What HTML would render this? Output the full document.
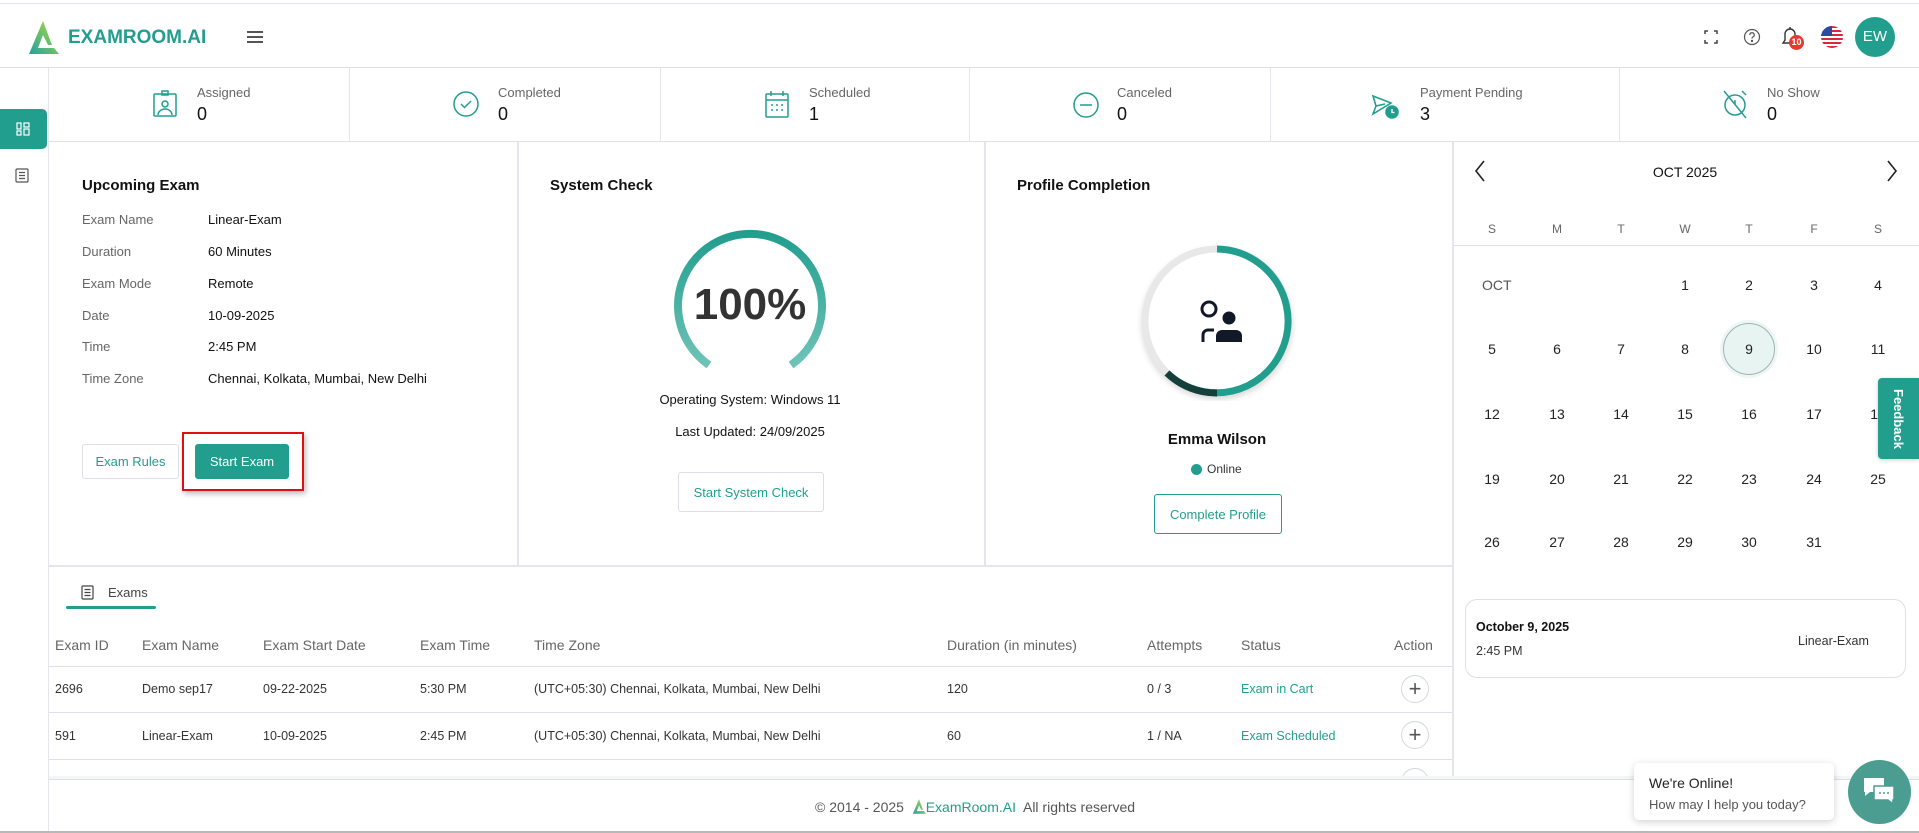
<!DOCTYPE html>
<html><head><meta charset="utf-8"><style>
*{box-sizing:border-box;margin:0;padding:0}
body{width:1919px;height:833px;overflow:hidden;background:#fff;font-family:"Liberation Sans",sans-serif;color:#111;position:relative}
.a{position:absolute}
.t{color:#229e8e}
.lbl{font-size:13px;color:#666}
.val{font-size:13px;color:#111}
.th{font-size:14px;color:#666}
.td{font-size:12.5px;color:#333}
.btn{position:absolute;border:1px solid #dcdfe6;border-radius:3px;font-size:13px;color:#229e8e;display:flex;align-items:center;justify-content:center;background:#fff}
</style></head><body>
<div class="a" style="left:0;top:3px;width:1919px;height:1px;background:#e4e6ec"></div>
<!-- header -->
<svg class="a" style="left:27px;top:21px" width="32" height="33" viewBox="0 0 32 33">
<defs><linearGradient id="g" x1="0" y1="1" x2="1" y2="0"><stop offset="0" stop-color="#1fa3a0"/><stop offset="1" stop-color="#b6dc3a"/></linearGradient></defs>
<path d="M16 0 L2 33 H32 L27 27 H11 L16 14 L21 24 H25 Z" fill="url(#g)"/>
</svg>
<div class="a t" style="left:68px;top:27px;font-size:19px;font-weight:bold;letter-spacing:0px">EXAMROOM.AI</div>
<div class="a" style="left:247px;top:31px;width:16px;height:2px;background:#555;box-shadow:0 5px 0 #555,0 10px 0 #555"></div>
<svg class="a" style="left:1704px;top:30px" width="14" height="14" fill="none" stroke="#444" stroke-width="1.5"><path d="M1 4V1h3M10 1h3v3M13 10v3h-3M4 13H1v-3"/></svg>
<svg class="a" style="left:1743px;top:28px" width="18" height="18" fill="none" stroke="#555" stroke-width="1.2"><circle cx="9" cy="9" r="7.5"/><path d="M6.8 7a2.2 2.2 0 1 1 3 2c-.7.4-.8.8-.8 1.6"/><circle cx="9" cy="13" r=".6" fill="#555"/></svg>
<svg class="a" style="left:1780px;top:25px" width="22" height="24" fill="none" stroke="#333" stroke-width="1.4"><path d="M3 18h14l-2-3V9a5 5 0 0 0-10 0v6z"/><path d="M10 2v2"/></svg>
<div class="a" style="left:1789px;top:35px;width:15px;height:15px;border-radius:50%;background:#e8392f;color:#fff;font-size:9px;font-weight:bold;text-align:center;line-height:15px">10</div>
<svg class="a" style="left:1821px;top:26px" width="22" height="22" viewBox="0 0 22 22"><clipPath id="c"><circle cx="11" cy="11" r="11"/></clipPath><g clip-path="url(#c)"><rect width="22" height="22" fill="#fff"/><g fill="#d8283a"><rect y="0" width="22" height="2"/><rect y="4" width="22" height="2"/><rect y="8" width="22" height="2"/><rect y="12" width="22" height="2"/><rect y="16" width="22" height="2"/><rect y="20" width="22" height="2"/></g><rect width="11" height="10" fill="#2b4aa0"/></g></svg>
<div class="a" style="left:1855px;top:17px;width:40px;height:40px;border-radius:50%;background:#229e8e;color:#fff;font-size:15px;text-align:center;line-height:40px">EW</div>
<div class="a" style="left:0;top:67px;width:1919px;height:1px;background:#dde0e8"></div>
<!-- sidebar -->
<div class="a" style="left:48px;top:68px;width:1px;height:765px;background:#e4e6ec"></div>
<div class="a" style="left:0;top:109px;width:47px;height:40px;background:#229e8e;border-radius:0 5px 5px 0"></div>
<svg class="a" style="left:16px;top:122px" width="14" height="14" fill="none" stroke="#fff" stroke-width="1.2"><rect x="1" y="1" width="4" height="6"/><rect x="8" y="1" width="5" height="4"/><rect x="1" y="9" width="4" height="4"/><rect x="8" y="7" width="5" height="6"/></svg>
<svg class="a" style="left:15px;top:168px" width="14" height="15" fill="none" stroke="#555" stroke-width="1.2"><rect x="1" y="1" width="12" height="13" rx="1"/><path d="M4 4.5h6M4 7.5h6M4 10.5h6"/></svg>
<!-- stats -->
<div class="a" style="left:49px;top:141px;width:1870px;height:1px;background:#dde0e8"></div>
<div class="a" style="left:349px;top:68px;width:1px;height:73px;background:#e4e6ec"></div>
<div class="a" style="left:660px;top:68px;width:1px;height:73px;background:#e4e6ec"></div>
<div class="a" style="left:969px;top:68px;width:1px;height:73px;background:#e4e6ec"></div>
<div class="a" style="left:1270px;top:68px;width:1px;height:73px;background:#e4e6ec"></div>
<div class="a" style="left:1619px;top:68px;width:1px;height:73px;background:#e4e6ec"></div>
<svg class="a" style="left:153px;top:90px" width="24" height="28" fill="none" stroke="#229e8e" stroke-width="1.5"><rect x="1" y="4" width="22" height="22" rx="1"/><path d="M9 1h6v4H9z"/><circle cx="12" cy="14" r="3"/><path d="M5 25a7 6 0 0 1 14 0"/></svg>
<svg class="a" style="left:453px;top:91px" width="26" height="26" fill="none" stroke="#229e8e" stroke-width="1.5"><circle cx="13" cy="13" r="12"/><path d="M8 13l3.5 3.5L18 10"/></svg>
<svg class="a" style="left:765px;top:90px" width="24" height="28" fill="none" stroke="#229e8e" stroke-width="1.5"><rect x="1" y="4" width="22" height="23" rx="1"/><path d="M1 10h22M6 1v5M18 1v5"/><g fill="#229e8e" stroke="none"><circle cx="7" cy="15" r="1"/><circle cx="12" cy="15" r="1"/><circle cx="17" cy="15" r="1"/><circle cx="7" cy="20" r="1"/><circle cx="12" cy="20" r="1"/><circle cx="17" cy="20" r="1"/></g></svg>
<svg class="a" style="left:1073px;top:92px" width="26" height="26" fill="none" stroke="#229e8e" stroke-width="1.5"><circle cx="13" cy="13" r="12"/><path d="M7 13h12"/></svg>
<svg class="a" style="left:1371px;top:94px" width="30" height="26" fill="none" stroke="#229e8e" stroke-width="1.6"><path d="M2 2l18 7-18 11 3-8zM5 12l9-2"/><circle cx="21" cy="18" r="6" fill="#229e8e"/><path d="M21 15v3.5h2.5" stroke="#fff" stroke-width="1.3"/></svg>
<svg class="a" style="left:1720px;top:88px" width="30" height="32" fill="none" stroke="#229e8e" stroke-width="1.5"><circle cx="15" cy="17" r="10"/><path d="M4 3l22 27M22 3l4 4M15 12v5"/></svg>
<div class="a lbl" style="left:197px;top:85px">Assigned</div><div class="a" style="left:197px;top:104px;font-size:18px">0</div>
<div class="a lbl" style="left:498px;top:85px">Completed</div><div class="a" style="left:498px;top:104px;font-size:18px">0</div>
<div class="a lbl" style="left:809px;top:85px">Scheduled</div><div class="a" style="left:809px;top:104px;font-size:18px">1</div>
<div class="a lbl" style="left:1117px;top:85px">Canceled</div><div class="a" style="left:1117px;top:104px;font-size:18px">0</div>
<div class="a lbl" style="left:1420px;top:85px">Payment Pending</div><div class="a" style="left:1420px;top:104px;font-size:18px">3</div>
<div class="a lbl" style="left:1767px;top:85px">No Show</div><div class="a" style="left:1767px;top:104px;font-size:18px">0</div>
<!-- cards -->
<div class="a" style="left:517px;top:142px;width:2px;height:424px;background:#e4e6ec"></div>
<div class="a" style="left:984px;top:142px;width:2px;height:424px;background:#e4e6ec"></div>
<div class="a" style="left:1452px;top:142px;width:2px;height:637px;background:#e4e6ec"></div>
<div class="a" style="left:49px;top:565px;width:1403px;height:2px;background:#e4e6ec"></div>
<div class="a" style="left:82px;top:177px;font-size:15px;font-weight:bold">Upcoming Exam</div>
<div class="a lbl" style="left:82px;top:212px">Exam Name</div><div class="a val" style="left:208px;top:212px">Linear-Exam</div>
<div class="a lbl" style="left:82px;top:244px">Duration</div><div class="a val" style="left:208px;top:244px">60 Minutes</div>
<div class="a lbl" style="left:82px;top:276px">Exam Mode</div><div class="a val" style="left:208px;top:276px">Remote</div>
<div class="a lbl" style="left:82px;top:308px">Date</div><div class="a val" style="left:208px;top:308px">10-09-2025</div>
<div class="a lbl" style="left:82px;top:339px">Time</div><div class="a val" style="left:208px;top:339px">2:45 PM</div>
<div class="a lbl" style="left:82px;top:371px">Time Zone</div><div class="a val" style="left:208px;top:371px">Chennai, Kolkata, Mumbai, New Delhi</div>
<div class="btn" style="left:82px;top:444px;width:97px;height:35px">Exam Rules</div>
<div class="a" style="left:182px;top:432px;width:122px;height:59px;border:2px solid #e01010;box-shadow:2px 3px 5px rgba(0,0,0,.25)"></div>
<div class="btn" style="left:195px;top:444px;width:94px;height:35px;background:#229e8e;color:#fff;border-color:#229e8e">Start Exam</div>
<div class="a" style="left:550px;top:177px;font-size:15px;font-weight:bold">System Check</div>
<svg class="a" style="left:670px;top:226px" width="160" height="160" viewBox="0 0 160 160"><defs><linearGradient id="r1" x1="0" y1="0" x2="0" y2="1"><stop offset="0" stop-color="#229e8e"/><stop offset="1" stop-color="#6ec3b7"/></linearGradient></defs><path d="M39 139 A72 72 0 1 1 121 139" fill="none" stroke="url(#r1)" stroke-width="8"/></svg>
<div class="a" style="left:670px;top:280px;width:160px;text-align:center;font-size:44px;font-weight:bold;color:#333">100%</div>
<div class="a val" style="left:600px;top:392px;width:300px;text-align:center">Operating System: Windows 11</div>
<div class="a val" style="left:600px;top:424px;width:300px;text-align:center">Last Updated: 24/09/2025</div>
<div class="btn" style="left:678px;top:472px;width:146px;height:40px">Start System Check</div>
<div class="a" style="left:1017px;top:177px;font-size:15px;font-weight:bold">Profile Completion</div>
<svg class="a" style="left:1137px;top:241px" width="160" height="160" viewBox="0 0 160 160"><circle cx="80" cy="80" r="72" fill="#fff" stroke="#e8e8e8" stroke-width="7" style="filter:drop-shadow(0 3px 3px rgba(0,0,0,.15))"/><path d="M80 8 A72 72 0 0 1 110 145 A72 72 0 0 1 30 132" fill="none" stroke="#229e8e" stroke-width="7"/><path d="M80 152 A72 72 0 0 1 30 132" fill="none" stroke="#153f3a" stroke-width="7"/>
<circle cx="72" cy="68" r="7" fill="none" stroke="#111827" stroke-width="3"/><path d="M66 101v-7a5 5 0 0 1 5-5h6" fill="none" stroke="#111827" stroke-width="3"/><circle cx="92" cy="77" r="6.5" fill="#111827"/><path d="M79 101v-6a6 6 0 0 1 6-6h14a6 6 0 0 1 6 6v6z" fill="#111827"/></svg>
<div class="a" style="left:1117px;top:431px;width:200px;text-align:center;font-size:15px;font-weight:bold">Emma Wilson</div>
<div class="a" style="left:1191px;top:464px;width:11px;height:11px;border-radius:50%;background:#229e8e"></div>
<div class="a val" style="left:1207px;top:462px;font-size:12px;color:#333">Online</div>
<div class="btn" style="left:1154px;top:494px;width:128px;height:40px;border-color:#229e8e">Complete Profile</div>
<!-- calendar -->
<svg class="a" style="left:1474px;top:160px" width="12" height="22" fill="none" stroke="#222" stroke-width="1.6"><path d="M10 1L2 11l8 10"/></svg>
<svg class="a" style="left:1886px;top:160px" width="12" height="22" fill="none" stroke="#222" stroke-width="1.6"><path d="M2 1l8 10-8 10"/></svg>
<div class="a" style="left:1635px;top:164px;width:100px;text-align:center;font-size:14px">OCT 2025</div>
<div class="a" style="left:1453px;top:245px;width:466px;height:1px;background:#dde0e8"></div>
<div class="a" style="left:1723px;top:323px;width:52px;height:52px;border-radius:50%;background:#e8f4f2;border:1px solid #9fb5b0;box-shadow:0 0 0 3px #eef6f5"></div>
<div id="cal"></div>
<div class="a" style="left:1465px;top:599px;width:441px;height:79px;border:1px solid #dde0e8;border-radius:12px"></div>
<div class="a" style="left:1476px;top:620px;font-size:12.5px;font-weight:bold">October 9, 2025</div>
<div class="a" style="left:1476px;top:644px;font-size:12.5px;color:#333">2:45 PM</div>
<div class="a" style="left:1798px;top:634px;font-size:12.5px;color:#333">Linear-Exam</div>
<div class="a" style="left:1878px;top:378px;width:41px;height:81px;background:#229e8e;border-radius:4px 0 0 4px;box-shadow:0 1px 4px rgba(0,0,0,.2)"></div>
<div class="a" style="left:1858px;top:411px;width:80px;height:16px;transform:rotate(90deg);text-align:center;color:#fff;font-weight:bold;font-size:13px;white-space:nowrap;line-height:16px">Feedback</div>
<!-- table -->
<svg class="a" style="left:81px;top:585px" width="13" height="15" fill="none" stroke="#444" stroke-width="1.2"><rect x="1" y="1" width="11" height="13" rx="1"/><path d="M3.5 4.5h6M3.5 7.5h6M3.5 10.5h6"/></svg>
<div class="a" style="left:108px;top:585px;font-size:13px;color:#444">Exams</div>
<div class="a" style="left:66px;top:606px;width:90px;height:3px;background:#229e8e;border-radius:2px"></div>
<div class="a th" style="left:55px;top:637px">Exam ID</div>
<div class="a th" style="left:142px;top:637px">Exam Name</div>
<div class="a th" style="left:263px;top:637px">Exam Start Date</div>
<div class="a th" style="left:420px;top:637px">Exam Time</div>
<div class="a th" style="left:534px;top:637px">Time Zone</div>
<div class="a th" style="left:947px;top:637px">Duration (in minutes)</div>
<div class="a th" style="left:1147px;top:637px">Attempts</div>
<div class="a th" style="left:1241px;top:637px">Status</div>
<div class="a th" style="left:1394px;top:637px">Action</div>
<div class="a" style="left:49px;top:666px;width:1403px;height:1px;background:#dde0e8"></div>
<div class="a" style="left:49px;top:712px;width:1403px;height:1px;background:#dde0e8"></div>
<div class="a" style="left:49px;top:759px;width:1403px;height:1px;background:#dde0e8"></div>
<div class="a td" style="left:55px;top:682px">2696</div><div class="a td" style="left:142px;top:682px">Demo sep17</div><div class="a td" style="left:263px;top:682px">09-22-2025</div><div class="a td" style="left:420px;top:682px">5:30 PM</div><div class="a td" style="left:534px;top:682px">(UTC+05:30) Chennai, Kolkata, Mumbai, New Delhi</div><div class="a td" style="left:947px;top:682px">120</div><div class="a td" style="left:1147px;top:682px">0 / 3</div><div class="a td" style="left:1241px;top:682px;color:#229e8e">Exam in Cart</div>
<div class="a td" style="left:55px;top:729px">591</div><div class="a td" style="left:142px;top:729px">Linear-Exam</div><div class="a td" style="left:263px;top:729px">10-09-2025</div><div class="a td" style="left:420px;top:729px">2:45 PM</div><div class="a td" style="left:534px;top:729px">(UTC+05:30) Chennai, Kolkata, Mumbai, New Delhi</div><div class="a td" style="left:947px;top:729px">60</div><div class="a td" style="left:1147px;top:729px">1 / NA</div><div class="a td" style="left:1241px;top:729px;color:#229e8e">Exam Scheduled</div>
<div class="a" style="left:1401px;top:675px;width:28px;height:28px;border-radius:50%;border:1px solid #d4d8e2;color:#555;font-size:22px;text-align:center;line-height:25px">+</div>
<div class="a" style="left:1401px;top:721px;width:28px;height:28px;border-radius:50%;border:1px solid #d4d8e2;color:#555;font-size:22px;text-align:center;line-height:25px">+</div>
<div class="a" style="left:1401px;top:768px;width:28px;height:8px;overflow:hidden"><div style="width:28px;height:28px;border-radius:50%;border:1px solid #d4d8e2"></div></div>
<!-- footer -->
<div class="a" style="left:49px;top:776px;width:1870px;height:3px;background:#f4f5f7"></div>
<div class="a" style="left:49px;top:779px;width:1870px;height:1px;background:#dde0e8"></div>
<div class="a" style="left:815px;top:799px;font-size:14px;color:#555;white-space:nowrap">© 2014 - 2025 &nbsp;<svg width="14" height="15" viewBox="0 0 32 33" style="vertical-align:-2px"><path d="M16 0 L2 33 H32 L27 27 H11 L16 14 L21 24 H25 Z" fill="url(#g)"/></svg><span class="t">ExamRoom.AI</span>&nbsp; All rights reserved</div>
<div class="a" style="left:0;top:831px;width:1919px;height:2px;background:#b8b8b8"></div>
<!-- chat -->
<div class="a" style="left:1634px;top:763px;width:200px;height:57px;background:#fff;border-radius:5px;box-shadow:0 2px 8px rgba(0,0,0,.18)"></div>
<div class="a" style="left:1649px;top:775px;font-size:14px;color:#222">We're Online!</div>
<div class="a" style="left:1649px;top:797px;font-size:13px;color:#555">How may I help you today?</div>
<div class="a" style="left:1848px;top:760px;width:63px;height:64px;border-radius:50%;background:#4a9d90"></div>
<svg class="a" style="left:1862px;top:776px" width="36" height="32" fill="#fff"><path d="M2 2h20v14H8l-5 4v-4H2z"/><path d="M12 10h20v14h-1v4l-5-4H12z" stroke="#4a9d90" stroke-width="1.5"/><circle cx="18" cy="17" r="1" fill="#4a9d90"/><circle cx="22" cy="17" r="1" fill="#4a9d90"/><circle cx="26" cy="17" r="1" fill="#4a9d90"/></svg>
<script>
var xs=[1492,1557,1621,1685,1749,1814,1878],h=['S','M','T','W','T','F','S'],o='';
h.forEach(function(d,i){o+='<div class="a" style="left:'+(xs[i]-20)+'px;top:222px;width:40px;text-align:center;font-size:12px;color:#666">'+d+'</div>';});
var ys=[285,349,414,479,542];
o+='<div class="a" style="left:1482px;top:277px;font-size:14px;color:#555">OCT</div>';
for(var d=1;d<=31;d++){var p=d+2,r=Math.floor(p/7),c=p%7;o+='<div class="a" style="left:'+(xs[c]-20)+'px;top:'+(ys[r]-8)+'px;width:40px;text-align:center;font-size:14px;color:#222">'+d+'</div>';}
document.getElementById('cal').innerHTML=o;
</script>
</body></html>
